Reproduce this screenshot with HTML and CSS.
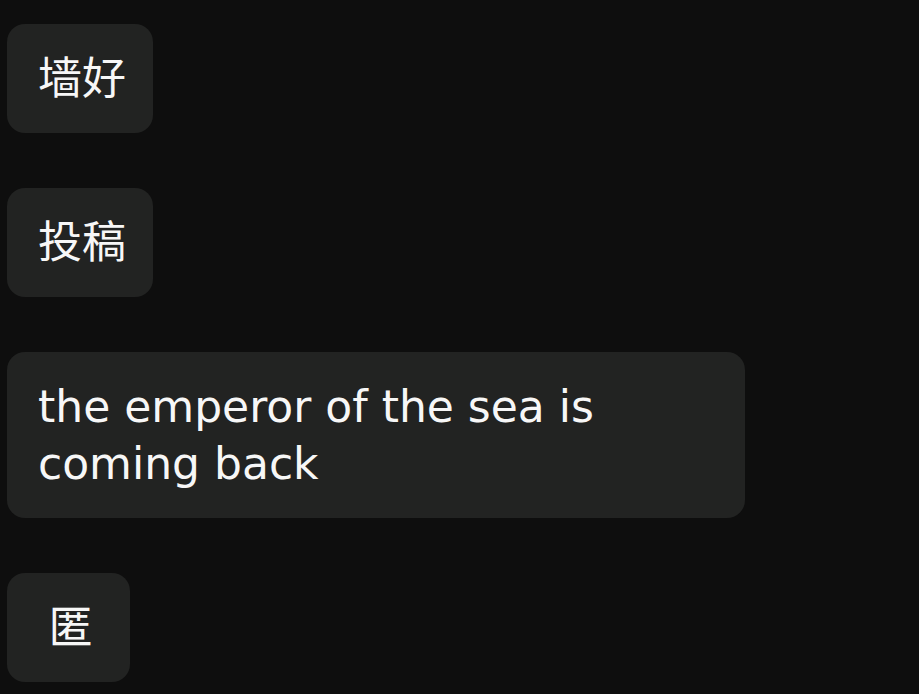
FILE: index.html
```html
<!DOCTYPE html>
<html lang="zh">
<head>
<meta charset="utf-8">
<link rel="stylesheet" href="styles.css">
</head>
<body>
<div class="chat">
  <div class="bubble">墙好</div>
  <div class="bubble">投稿</div>
  <div class="bubble">the emperor of the sea is coming back</div>
  <div class="bubble single">匿</div>
</div>
</body>
</html>
```
FILE: styles.css
```css
html, body {
  margin: 0;
  padding: 0;
  background: #0e0e0e;
}
body {
  width: 919px;
  height: 694px;
  overflow: hidden;
}
.chat {
  display: flex;
  flex-direction: column;
  align-items: flex-start;
  gap: 55px;
  padding: 24px 0 0 7px;
}
.bubble {
  background: #222322;
  color: #f7f7f7;
  font-family: "DejaVu Sans", "Noto Sans CJK SC", sans-serif;
  font-size: 44px;
  line-height: 57px;
  padding: 26px 27px 26px 31px;
  border-radius: 18px;
  max-width: 738px;
  box-sizing: border-box;
}
.single {
  min-width: 123px;
  text-align: center;
}
```
